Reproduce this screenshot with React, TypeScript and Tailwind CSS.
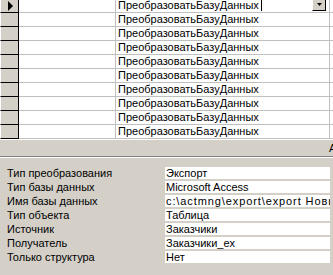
import React from 'react';

const args: [string, string, string][] = [
    ['Тип преобразования', 'Экспорт', ''],
    ['Тип базы данных', 'Microsoft Access', ''],
    ['Имя базы данных', 'c:\\actmng\\export\\export Новые клиенты.mdb', 'tracking-[0.9px]'],
    ['Тип объекта', 'Таблица', ''],
    ['Источник', 'Заказчики', ''],
    ['Получатель', 'Заказчики_ex', ''],
    ['Только структура', 'Нет', ''],
];

function GridRow({ first }: { first: boolean }) {
    return (
        <div className="flex h-[14px]">
            <div className="w-[19px] shrink-0 bg-[#d4d0c8] border-l border-l-white border-r border-b border-black flex items-center pl-[7px]">
                {first && (
                    <svg width="6" height="10" viewBox="0 0 6 10">
                        <path d="M0 0 L5 5 L0 10 Z" fill="#000" />
                    </svg>
                )}
            </div>
            <div className="w-[97px] shrink-0 border-r border-b border-[#c0c0c0]" />
            <div className="w-[214px] shrink-0 border-r border-b border-[#c0c0c0] pl-[2px] flex items-center relative">
                <span className="leading-[13px] whitespace-nowrap">ПреобразоватьБазуДанных</span>
                {first && (
                    <>
                        <span className="inline-block w-px h-[11px] bg-black ml-[2px]" />
                        <div className="absolute right-[3px] top-[-1px] w-[14px] h-[13px] bg-[#d4d0c8] border-t border-l border-t-white border-l-white border-r border-b border-r-black border-b-black flex items-center justify-center">
                            <svg width="5" height="3" viewBox="0 0 5 3">
                                <path d="M0 0 H5 L2.5 3 Z" fill="#000" />
                            </svg>
                        </div>
                    </>
                )}
            </div>
            <div className="flex-1 border-b border-[#c0c0c0]" />
        </div>
    );
}

export default function App() {
    return (
        <div
            className="w-[333px] h-[275px] overflow-hidden bg-white flex flex-col text-[11px] text-black"
            style={{ fontFamily: '"Liberation Sans", Arial, sans-serif' }}
        >
            <div className="h-[139px] overflow-hidden shrink-0">
                <div className="-mt-px">
                    {Array.from({ length: 10 }).map((_, i) => (
                        <GridRow key={i} first={i === 0} />
                    ))}
                </div>
            </div>
            <div className="h-px bg-white shrink-0" />
            <div className="h-[17px] shrink-0 bg-[#d4d0c8] border-b border-[#808080] pl-[329px] overflow-hidden whitespace-nowrap leading-[16px]">
                Аргументы макрокоманды
            </div>
            <div className="h-px bg-white shrink-0" />
            <div className="flex-1 bg-[#d4d0c8] pt-[9px] flex flex-col gap-[2px]">
                {args.map(([label, value, extra]) => (
                    <div key={label} className="flex h-[12px] items-center">
                        <div className="w-[165px] shrink-0 pl-[7px] leading-[12px] whitespace-nowrap">{label}</div>
                        <div className={`w-[165px] h-[12px] bg-white pl-px leading-[12px] overflow-hidden whitespace-nowrap ${extra}`}>
                            {value}
                        </div>
                    </div>
                ))}
            </div>
        </div>
    );
}
